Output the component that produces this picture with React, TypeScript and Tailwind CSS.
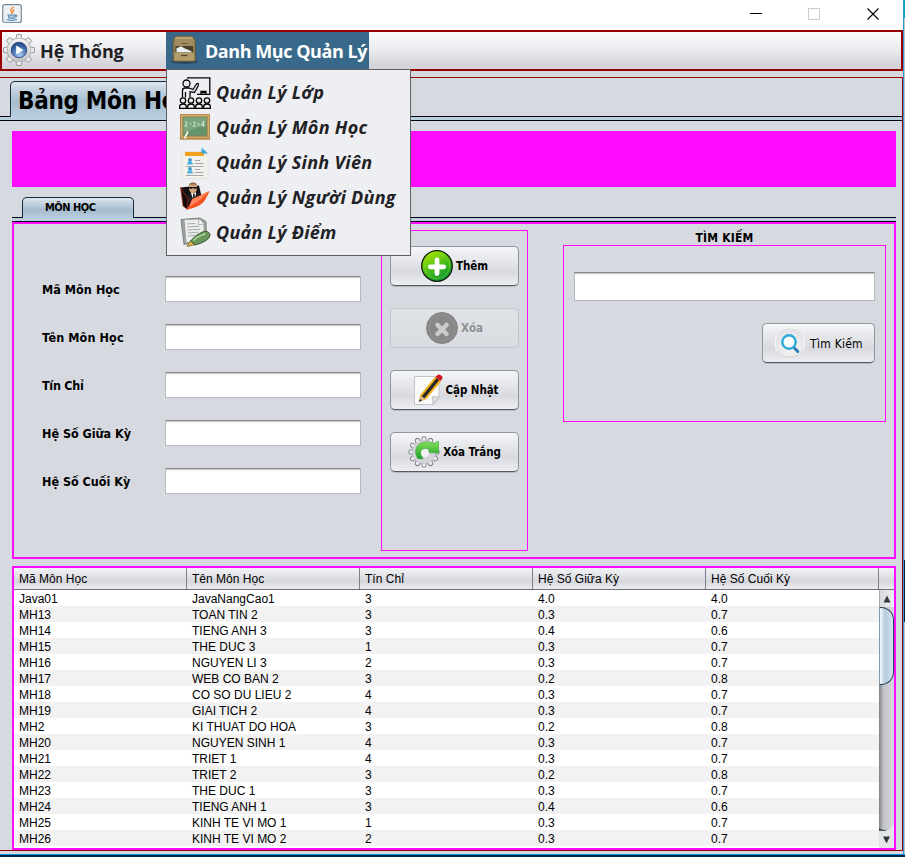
import type { ReactNode } from "react";

const rows: [string, string, string, string, string][] = [
  ["Java01", "JavaNangCao1", "3", "4.0", "4.0"],
  ["MH13", "TOAN TIN 2", "3", "0.3", "0.7"],
  ["MH14", "TIENG ANH 3", "3", "0.4", "0.6"],
  ["MH15", "THE DUC 3", "1", "0.3", "0.7"],
  ["MH16", "NGUYEN LI 3", "2", "0.3", "0.7"],
  ["MH17", "WEB CO BAN 2", "3", "0.2", "0.8"],
  ["MH18", "CO SO DU LIEU 2", "4", "0.3", "0.7"],
  ["MH19", "GIAI TICH 2", "4", "0.3", "0.7"],
  ["MH2", "KI THUAT DO HOA", "3", "0.2", "0.8"],
  ["MH20", "NGUYEN SINH 1", "4", "0.3", "0.7"],
  ["MH21", "TRIET 1", "4", "0.3", "0.7"],
  ["MH22", "TRIET 2", "3", "0.2", "0.8"],
  ["MH23", "THE DUC 1", "3", "0.3", "0.7"],
  ["MH24", "TIENG ANH 1", "3", "0.4", "0.6"],
  ["MH25", "KINH TE VI MO 1", "1", "0.3", "0.7"],
  ["MH26", "KINH TE VI MO 2", "2", "0.3", "0.7"],
];

const columns = ["Mã Môn Học", "Tên Môn Học", "Tín Chỉ", "Hệ Số Giữa Kỳ", "Hệ Số Cuối Kỳ"];

const fields: [string, string][] = [
  ["Mã Môn Học", "tracking-[0.050px]"],
  ["Tên Môn Học", "tracking-[0.100px]"],
  ["Tín Chỉ", "tracking-[-0.300px]"],
  ["Hệ Số Giữa Kỳ", "tracking-[-0.020px]"],
  ["Hệ Số Cuối Kỳ", "tracking-[-0.020px]"],
];

function GearPlayIcon() {
  return (
    <svg width="32" height="32" viewBox="0 0 32 32" className="mt-[-2px] shrink-0">
      <defs>
        <linearGradient id="gearBody" x1="0" y1="0" x2="0" y2="1">
          <stop offset="0" stopColor="#f4f4f4" />
          <stop offset="1" stopColor="#c4c4c6" />
        </linearGradient>
        <radialGradient id="gearBall" cx=".55" cy=".8" r=".8">
          <stop offset="0" stopColor="#a9cdf3" />
          <stop offset=".6" stopColor="#416cab" />
          <stop offset="1" stopColor="#20427c" />
        </radialGradient>
      </defs>
      <g transform="translate(16 16)">
        {[0, 45, 90, 135, 180, 225, 270, 315].map((a) => (
          <path key={a} d="M-4-11l1.300-1.500.4-2.800q2.300-.5 4.600 0l.4 2.800L4-11z" fill="#ececed" stroke="#8f9092" strokeWidth=".9" transform={`rotate(${a})`} />
        ))}
      </g>
      <circle cx="16" cy="16" r="11.800" fill="url(#gearBody)" stroke="#a9aaac" strokeWidth=".6" />
      <circle cx="16" cy="16" r="7.800" fill="url(#gearBall)" stroke="#22407a" strokeWidth=".8" />
      <path d="M13.200 11.600l7.300 4.400-7.300 4.400z" fill="#fff" />
    </svg>
  );
}

function CabinetIcon() {
  return (
    <svg width="30" height="30" viewBox="0 0 30 30" className="mt-[-2px] shrink-0">
      <ellipse cx="15.500" cy="26.500" rx="13.500" ry="2.500" fill="#1f3b50" opacity=".65" />
      <g transform="translate(1 0)">
        <path d="M4.500 2.500Q5 1 6.500 1h15q1.500 0 2 1.500L25.500 6v19q0 1.500-1.500 1.500H4.500Q3 26.500 3 25V6z" fill="#8f7d52" stroke="#54462a" strokeWidth=".6" />
        <path d="M5.500 2h17l1 2.500h-19z" fill="#b8a576" />
        <rect x="5" y="4.500" width="18.500" height="8" fill="#a08c5e" />
        <path d="M11.500 8.500h6" stroke="#6d5b37" strokeWidth="1" />
        <rect x="5.500" y="11" width="17.500" height="7" fill="#4a3e28" />
        <path d="M6.500 17.500v-4.300l4.500-2 4.500 2.500 5.500 2.300 1 1.500z" fill="#e9edf2" />
        <rect x="4.500" y="17.500" width="19.500" height="8" fill="#b19d69" />
        <path d="M11 20.500h6.500" stroke="#54462a" strokeWidth="1.300" />
      </g>
    </svg>
  );
}

function ClassIcon() {
  return (
    <svg width="32" height="32" viewBox="0 0 32 32" fill="none" stroke="#050505" strokeWidth="1.300">
      <path d="M8 .9h22.800v16.500H18M22 17v-2.500h5V17M22.500 15.700h4" />
      <circle cx="7.500" cy="6.500" r="3.500" fill="#edeff2" />
      <path d="M3.500 20.500v-7q0-2.500 2.500-2.500h4l4 1.500 3.500-5.500q1-1.300 2 0 .5 1-4 8.500l-4.500-.800v5.800M6.500 15v5.500" />
      {[4, 12, 20, 28].map((x) => (
        <g key={x}>
          <circle cx={x} cy="23.500" r="2.700" fill="#edeff2" />
          <path d={`M${x - 3.300} 31.300v-2q0-2.300 3.300-2.300t3.300 2.300v2z`} fill="#edeff2" />
        </g>
      ))}
    </svg>
  );
}

function BoardIcon() {
  return (
    <svg width="32" height="32" viewBox="0 0 32 32">
      <rect x="1.500" y="2.500" width="29" height="24.500" fill="#d6ad6b" stroke="#b08a51" />
      <rect x="4" y="5" width="24" height="19" fill="#64936c" stroke="#8b7a4f" />
      <path d="M4.500 5.500h23v7L4.500 21z" fill="#79a47c" />
      <g fill="none" stroke="#dbe9dc" strokeWidth=".9">
        <path d="M5.800 10.500q2.500-2 2.300.6l-2.300 3h3M10.500 12h2M14 10.500q2.500-2 2.300.6l-2.300 3h3M18.500 11.700h2m-2 1.500h2M24.600 15v-6l-2.300 4.200h3.500" />
      </g>
      <path d="M1 25.500h30l.5 2H.5z" fill="#b98d53" />
      <path d="M9 19.500L5.500 26.500" stroke="#f5f3ed" strokeWidth="1.700" />
    </svg>
  );
}

function StudentListIcon() {
  return (
    <svg width="32" height="32" viewBox="0 0 32 32">
      <path d="M3 4.500h20l6 4V31.500H3z" fill="#f3f1ec" stroke="#dcdad7" strokeWidth=".6" />
      <path d="M6 5h19v4H6z" fill="#f2a11f" />
      <path d="M22.500.5L29 6.500h-6.500z" fill="#3ba6d9" />
      {[11, 20].map((y) => (
        <g key={y}>
          <circle cx="11" cy={y + 2} r="1.900" fill="#3a9bd0" />
          <path d={`M8 ${y + 6.500}q.3-3 3-3t3 3z`} fill="#4aaee0" />
          <path d={`M16 ${y + 2.500}h5M15.500 ${y + 5.500}h9M7 ${y + 8.500}h17.500`} stroke="#a4a7aa" />
        </g>
      ))}
    </svg>
  );
}

function UserFolderIcon() {
  return (
    <svg width="32" height="32" viewBox="0 0 32 32">
      <path d="M1.500 5.500L20 3.500l3 13L8.500 26z" fill="#121214" />
      <path d="M8 18l2-5.500L12.500 10h4l4.500 2 1 6-9 6z" fill="#202125" />
      <path d="M11.800 10.500h5.400l-1.500 6.500-1.200 1z" fill="#fff" />
      <path d="M14 11.500h1.500l.6 4.500-1.100 2-.9-2z" fill="#222" />
      <path d="M10 3.500Q10 .8 14 .8t4 2.700v4q-1.300 3.800-4 3.800t-4-3.800z" fill="#d3a47b" />
      <path d="M9.800 4Q9.700.4 14 .4T18.200 4l-.8-1.600h-6.600z" fill="#8a6a50" />
      <path d="M9.800 4.900h8.400v.9l-.6 1h-2.500L14 5.800 12.900 6.800h-2.500z" fill="#161616" />
      <path d="M1.500 5.500L9 17l-.5 10.500L4 24z" fill="#160b0b" stroke="#c9301e" strokeWidth=".7" />
      <path d="M8.500 27.500L13 17 30.500 9q-.8 2.500-4.500 9T8.500 27.500z" fill="#f4511e" />
      <path d="M10 25L13.500 17.500 30 9.500 21 18z" fill="#ff8a62" />
    </svg>
  );
}

function NotesPenIcon() {
  return (
    <svg width="32" height="32" viewBox="0 0 32 32">
      <path d="M2 2.500L21 1l6 3.500.5 18.500L5 27.500l-1.500-12z" fill="#9fa39f" stroke="#6e736e" strokeWidth=".8" />
      <path d="M5 2.500l15-.5 5 5 .5 16L7 26z" fill="#eceeec" stroke="#8d918d" strokeWidth=".8" />
      <path d="M20 2l-.5 5.500 5.500-.5" fill="#fff" stroke="#8d918d" strokeWidth=".7" />
      <path d="M8 7l8-.6M8.300 10l12-.8M8.500 13l13-.8M8.700 16l11-.8M9 19l7-.6" stroke="#a8aca8" />
      <path d="M8 29.500l3.500-5.800 4.500 4z" fill="#e3b94d" stroke="#6f5c25" strokeWidth=".7" />
      <path d="M11.500 24q5-6.500 13-9.500 4.500-1 6.500 2.500.8 3.500-4 6.500-5 3.300-10.800 4.400z" fill="#6a965b" stroke="#334d2e" strokeWidth=".9" />
      <path d="M14.500 23.500q5-5 12-6.800" stroke="#b5d5a6" strokeWidth="1.600" fill="none" />
    </svg>
  );
}

function JavaIcon() {
  return (
    <svg width="20" height="20" viewBox="0 0 20 20">
      <rect x=".7" y=".7" width="18.600" height="17.800" rx="2" fill="#eef1f3" stroke="#778c9d" strokeWidth="1.200" />
      <path d="M12 3q-5 2.500-2.500 4.500 1.500 1.500-.5 3M12.500 5.500q-2.500 1.300-1 2.800" stroke="#ed8637" strokeWidth="1.300" fill="none" />
      <path d="M6 11h7.500l-.8 3.200H7zM13.500 11q2.500 0 .5 2M4.500 15.500q5 2 10.500 0" stroke="#5b8db4" strokeWidth="1.100" fill="#a8c3d7" />
    </svg>
  );
}

function AddIcon() {
  return (
    <svg width="32" height="32" viewBox="0 0 32 32">
      <defs>
        <linearGradient id="addFill" x1=".2" y1="0" x2=".75" y2="1">
          <stop offset="0" stopColor="#b4ea00" />
          <stop offset=".5" stopColor="#4fbf18" />
          <stop offset="1" stopColor="#00913c" />
        </linearGradient>
      </defs>
      <circle cx="16" cy="16" r="15.300" fill="url(#addFill)" stroke="#0c1d0b" strokeWidth="1.300" />
      <circle cx="16" cy="16" r="12.500" fill="none" stroke="#86d51c" strokeWidth="1" opacity=".6" />
      <path d="M16 10v13.500M9.300 16.800h13.400" stroke="#fff" strokeWidth="4.800" strokeLinecap="round" />
    </svg>
  );
}

function DeleteIcon() {
  return (
    <svg width="32" height="32" viewBox="0 0 32 32">
      <circle cx="16" cy="16" r="15.500" fill="#888" stroke="#858585" />
      <circle cx="16" cy="16" r="13" fill="none" stroke="#929292" />
      <path d="M11.500 13l9 9M20.500 13l-9 9" stroke="#ccc" strokeWidth="4.500" strokeLinecap="round" />
    </svg>
  );
}

function PencilIcon() {
  return (
    <svg width="32" height="32" viewBox="0 0 32 32">
      <path d="M3.500 2.500H28v21L22 30.500H3.500z" fill="#fafafa" stroke="#c3c4c5" />
      <path d="M28 23l-6.500-.5.500 8z" fill="#e1e2e3" stroke="#a9aaab" strokeWidth=".7" />
      <path d="M24 3l6 4.300L15 25.500l-6-4.200z" fill="#efad18" />
      <path d="M26.800 5.200L12 23.400" stroke="#262729" strokeWidth="3.200" />
      <path d="M9 21.300l6 4.200-7 2.500z" fill="#dab678" />
      <path d="M8 28l.8-3 2 1.500z" fill="#222" />
      <path d="M24.500 3.200l1.800-2q1.500-1.300 3.800.3 2.300 1.700.9 3.500l-1.500 2z" fill="#cf1720" />
    </svg>
  );
}

function ResetIcon() {
  return (
    <svg width="32" height="32" viewBox="0 0 32 32">
      <defs>
        <linearGradient id="resetArrow" x1="0" y1="0" x2="0" y2="1">
          <stop offset="0" stopColor="#86e35a" />
          <stop offset="1" stopColor="#1d9d25" />
        </linearGradient>
      </defs>
      <g transform="translate(16 16)">
        {[0, 30, 60, 90, 120, 150, 180, 210, 240, 270, 300, 330].map((a) => (
          <path key={a} d="M-2.400-11l.4-2.800Q-2-15.300 0-15.300T2-13.800l.4 2.800z" fill="#ebecef" stroke="#77787c" strokeWidth=".9" transform={`rotate(${a})`} />
        ))}
      </g>
      <circle cx="16" cy="16" r="11.800" fill="#d3d4da" />
      <path d="M9.500 22.500Q5 14 10.500 8.500 17 3.500 26 7.500L30.500 5v12l-12.500-.5 3.500-3.500q-6-1.500-8 2.500-1 3 1.500 7.500z" fill="url(#resetArrow)" stroke="#2b9c2c" strokeWidth=".5" />
      <circle cx="17" cy="17" r="4" fill="#f1f2f4" />
    </svg>
  );
}

function SearchIcon() {
  return (
    <svg width="32" height="32" viewBox="0 0 32 32">
      <defs>
        <radialGradient id="searchPlate" cx=".5" cy=".6" r=".65">
          <stop offset="0" stopColor="#f8f8f8" />
          <stop offset="1" stopColor="#dfe0e2" />
        </radialGradient>
      </defs>
      <rect x="1.500" y="1" width="29" height="30" rx="12" fill="url(#searchPlate)" stroke="#f5f5f6" />
      <path d="M3 24q4 6.500 13 6.500T29 24" fill="none" stroke="#c7c8ca" strokeWidth=".8" />
      <path d="M19.800 20.500l4 4" stroke="#2b7db5" strokeWidth="3" strokeLinecap="round" />
      <circle cx="15" cy="15" r="6.700" fill="#f9fbfc" stroke="#2da9dc" strokeWidth="2.400" />
    </svg>
  );
}

const menuItems: [string, ReactNode][] = [
  ["Quản Lý Lớp", <ClassIcon />],
  ["Quản Lý Môn Học", <BoardIcon />],
  ["Quản Lý Sinh Viên", <StudentListIcon />],
  ["Quản Lý Người Dùng", <UserFolderIcon />],
  ["Quản Lý Điểm", <NotesPenIcon />],
];

const buttonSkin =
  "flex h-10 items-center justify-center rounded-[5px] border border-[#92959b] border-b-[#55585e] bg-linear-to-b from-[#f5f6f8] via-[#d8dadf] via-65% to-[#eceef4] shadow-[0_1px_0_#b5b8be]";

function ActionButton({ icon, label, disabled }: { icon: ReactNode; label: string; disabled?: boolean }) {
  return (
    <button
      disabled={disabled}
      className={
        disabled
          ? "flex h-10 w-[129px] items-center justify-center rounded-[5px] border border-[#c2c5ca] bg-linear-to-b from-[#dfe2e6] to-[#d8dbe1] text-[11.500px] font-bold text-[#8e8f91]"
          : `${buttonSkin} w-[129px] text-[11.500px] font-bold text-black`
      }
    >
      {icon}
      <span className="ml-[3px] pt-0.5 whitespace-nowrap tracking-[-0.080px]">{label}</span>
    </button>
  );
}

function TextField({ size }: { size: string }) {
  return <input className={`${size} block border border-[#b8babd] border-t-[#85878a] bg-white shadow-[inset_0_1px_0_#cfcfcf,inset_0_2px_0_#f2f2f2] outline-none`} />;
}

function TabStrip({ lead, height, children }: { lead: string; height: string; children: ReactNode }) {
  return (
    <div>
      <div className={`flex ${height}`}>
        <div className={`${lead} border-b border-[#05050f]`} />
        {children}
        <div className="flex-1 border-b border-[#05050f]" />
      </div>
      <div className="h-1 border-b border-[#05050f] bg-[#b9cfdf]" />
    </div>
  );
}

export default function App() {
  return (
    <div className="h-[858px] w-[910px] overflow-hidden bg-white [font-family:'DejaVu_Sans_Condensed','DejaVu_Sans',sans-serif] text-black">
      <div className="flex h-[854px] w-[905px]">
        <div className="flex w-[903px] flex-col bg-[#d6d9df]">
          <header className="flex h-[30px] shrink-0 items-center bg-white">
            <div className="mt-[-3px] ml-0.5 flex-1">
              <JavaIcon />
            </div>
            <svg width="130" height="14" viewBox="0 0 130 14" className="mt-[-2px] mr-[23px]" fill="none" shapeRendering="crispEdges">
              <path d="M0 6.500h12" stroke="#000" />
              <rect x="58.500" y="1.500" width="11" height="11" stroke="#ccc" />
              <path d="M117.500 1.500l11 11M128.500 1.500l-11 11" stroke="#000" strokeWidth="1.100" shapeRendering="auto" />
            </svg>
          </header>

          <nav className="relative z-10 flex h-[41px] shrink-0 border-2 border-[#970000] bg-linear-to-b from-[#fbfbfc] via-[#ebedf0] via-45% to-[#d3d5db] to-90% [font-family:'Open_Sans','Noto_Sans',sans-serif] text-[18px] font-bold text-[#1f2125]">
            <div className="flex w-[164px] items-center pl-px">
              <GearPlayIcon />
              <span className="ml-[5px] pt-0.5 whitespace-nowrap tracking-[-0.100px]">Hệ Thống</span>
            </div>
            <div className="relative flex w-[203px] items-center bg-[#39698a] pl-[3px] text-white">
              <CabinetIcon />
              <span className="ml-[6px] pt-0.5 whitespace-nowrap tracking-[-0.450px]">Danh Mục Quản Lý</span>
              <div className="absolute top-[37px] left-0 h-[187px] w-[245px] border border-[#5e6164] bg-[#edeff2] pt-[5px] pl-3 text-[#1f2125] italic">
                {menuItems.map(([label, icon]) => (
                  <div key={label} className="flex h-[35px] items-center">
                    {icon}
                    <span className="ml-[5px] whitespace-nowrap tracking-[0.270px]">{label}</span>
                  </div>
                ))}
              </div>
            </div>
          </nav>

          <main className="mt-[6px] flex h-[774px] shrink-0 flex-col border-t border-r border-b border-[#970000] pt-[3px]">
            <TabStrip lead="w-[10px]" height="h-[36px]">
              <div className="w-[190px] overflow-hidden rounded-t-[5px] border border-b-0 border-[#1b2b3b] bg-linear-to-b from-[#dce5ee] via-[#a6bccf] via-55% to-[#b9cfdf] pl-[7px] text-[24px] leading-[38px] font-bold whitespace-nowrap tracking-[-0.300px]">
                Bảng Môn Học
              </div>
            </TabStrip>

            <div className="flex flex-col pt-[10px] pr-[6px] pl-3">
              <div className="mb-[10px] h-[56px] bg-[#ff0dff]" />
              <TabStrip lead="w-[10px]" height="h-[21px]">
                <div className="w-[112px] rounded-t-[5px] border border-b-0 border-[#1b2b3b] bg-linear-to-b from-[#dce5ee] via-[#a6bccf] via-60% to-[#b9cfdf] pl-[22px] text-[11px] leading-[20px] font-bold whitespace-nowrap tracking-[-0.500px]">
                  MÔN HỌC
                </div>
              </TabStrip>

              <section className="flex h-[337px] border-2 border-[#ff0dff] text-[12px] font-bold">
                <div className="flex w-[367px] flex-col gap-[22px] pt-[52px] pl-[28px] text-[12.500px]">
                  {fields.map(([f, tracking]) => (
                    <label key={f} className="flex h-[26px] items-center">
                      <span className={`w-[123px] pt-0.5 whitespace-nowrap ${tracking}`}>{f}</span>
                      <TextField size="h-[26px] w-[196px]" />
                    </label>
                  ))}
                </div>
                <div className="mt-[6px] flex h-[321px] w-[147px] flex-col gap-[22px] border border-[#ff0dff] pt-[15px] pl-2">
                  <ActionButton icon={<AddIcon />} label="Thêm" />
                  <ActionButton icon={<DeleteIcon />} label="Xóa" disabled />
                  <ActionButton icon={<PencilIcon />} label="Cập Nhật" />
                  <ActionButton icon={<ResetIcon />} label="Xóa Trắng" />
                </div>
                <div className="ml-[35px] w-[323px]">
                  <h2 className="h-[21px] pt-[6px] text-center text-[12px] leading-[16px] tracking-[0.200px]">TÌM KIẾM</h2>
                  <div className="flex h-[177px] flex-col gap-[22px] border border-[#ff0dff] pt-[26px] pr-[10px] pl-[10px]">
                    <TextField size="h-[29px] w-[301px]" />
                    <button className={`${buttonSkin} w-[113px] self-end text-[12px] font-normal`}>
                      <SearchIcon />
                      <span className="ml-1 pt-0.5 whitespace-nowrap tracking-[0.250px]">Tìm Kiếm</span>
                    </button>
                  </div>
                </div>
              </section>

              <section className="mt-[7px] h-[284px] border-2 border-[#ff0dff] bg-white [font-family:'Liberation_Sans',Arial,sans-serif] text-[12px]">
                <div className="flex h-[22px] border-b border-[#6c6f78] bg-linear-to-b from-[#f2f3f5] via-[#d5d7dd] via-65% to-[#eceef4]">
                  {columns.map((c) => (
                    <div key={c} className="w-[173px] border-r border-[#7d8088] pl-[5px] leading-[23px] whitespace-nowrap tracking-[0.020px]">
                      {c}
                    </div>
                  ))}
                </div>
                <div className="flex h-[258px]">
                  <div className="w-[865px]">
                    {rows.map((r) => (
                      <div key={r[0]} className="flex h-4 leading-[19px] even:bg-[#f2f2f2]">
                        {r.map((cell, i) => (
                          <div key={i} className="w-[173px] pl-[5px] whitespace-nowrap">
                            {cell}
                          </div>
                        ))}
                      </div>
                    ))}
                  </div>
                  <div className="flex w-[15px] flex-col bg-linear-to-r from-[#7f8287] via-[#c1c3c9] via-30% to-[#d6d8dd]">
                    <div className="flex h-[17px] items-center justify-center border-l border-[#a9abb0] bg-linear-to-r from-[#d8dade] to-[#eef0f3]">
                      <svg width="8" height="8" viewBox="0 0 8 8">
                        <path d="M4 .5L7.500 7.500h-7z" fill="#33363b" />
                      </svg>
                    </div>
                    <div className="h-[78px] rounded-r-[13px] border border-l-[#8398a9] border-[#274057] bg-linear-to-r from-[#f4f7fa] via-[#b4cbdf] via-40% to-[#d5e5f2]" />
                    <div className="flex-1" />
                    <svg width="15" height="25" viewBox="0 0 15 25">
                      <path d="M0 8h5q6 0 10-8v25H0z" fill="#e3e5e9" />
                      <path d="M0 5q6 4 10 0l-4 3H0z" fill="#4b4e52" />
                      <path d="M4 13.500h7l-3.500 7z" fill="#33363b" />
                    </svg>
                  </div>
                </div>
              </section>
            </div>
          </main>
        </div>
        <div className="w-px bg-[#3097d4]" />
        <div className="flex w-px flex-col bg-[#bcc4cc]">
          <div className="h-[18px] bg-[#00a0c8]" />
          <div className="mt-[542px] h-[62px] bg-[#06222f]" />
        </div>
      </div>
      <div className="h-[3px] w-[905px] border-t border-[#0f8fe6] bg-[#00264a]" />
    </div>
  );
}
